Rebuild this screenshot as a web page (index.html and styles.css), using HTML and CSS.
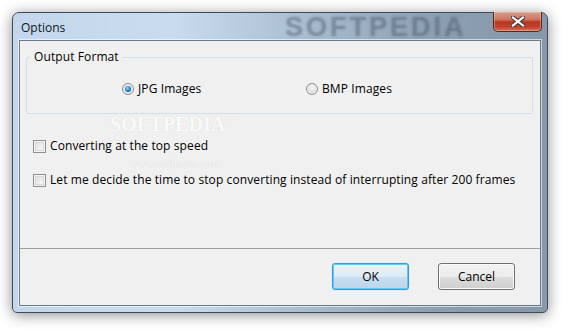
FILE: index.html
```html
<!DOCTYPE html>
<html lang="en">
<head>
    <meta charset="UTF-8">
    <title>Options</title>
    <link rel="stylesheet" href="styles.css">
</head>
<body>
    <div class="window">
        <div class="titlebar">
            <span class="title">Options</span>
            <span class="title-mark">SOFTPEDIA</span>
            <button class="close-btn" aria-label="Close">
                <svg width="14" height="11" viewBox="0 0 14 11">
                    <path d="M2 1.5 L12 9.5 M12 1.5 L2 9.5" stroke="#3a3a3a" stroke-width="4.2" stroke-linecap="square"/>
                    <path d="M2 1.5 L12 9.5 M12 1.5 L2 9.5" stroke="#ffffff" stroke-width="2.2" stroke-linecap="square"/>
                </svg>
            </button>
        </div>

        <div class="client">
            <div class="body">
                <fieldset class="group">
                    <legend>Output Format</legend>
                    <div class="radio-row">
                        <label class="option">
                            <span class="radio checked"></span>
                            JPG Images
                        </label>
                        <label class="option">
                            <span class="radio"></span>
                            BMP Images
                        </label>
                    </div>
                </fieldset>

                <div class="checks">
                    <label class="option">
                        <span class="checkbox"></span>
                        Converting at the top speed
                    </label>
                    <label class="option">
                        <span class="checkbox"></span>
                        Let me decide the time to stop converting instead of interrupting after 200 frames
                    </label>
                </div>

                <span class="mark-big">SOFTPEDIA<sup>™</sup></span>
                <span class="mark-small">www.softpedia.com</span>
            </div>

            <div class="footer">
                <button class="btn btn-default">OK</button>
                <button class="btn">Cancel</button>
            </div>
        </div>
    </div>
</body>
</html>
```

FILE: styles.css
```css
* {
    margin: 0;
    padding: 0;
    box-sizing: border-box;
}

body {
    width: 568px;
    height: 333px;
    background: #ffffff;
    font-family: 'Open Sans', 'Liberation Sans', sans-serif;
    font-size: 12px;
    color: #000;
    overflow: hidden;
}

.window {
    margin: 12px 0 0 12px;
    width: 536px;
    height: 301px;
    border: 1px solid #3f4b57;
    border-radius: 7px 7px 5px 5px;
    background: linear-gradient(90deg, #c3d7ec 0%, #c9dcef 30%, #a9bdd1 55%, #8c9eb1 80%, #8698aa 100%);
    box-shadow: 0 2px 14px rgba(0, 0, 0, 0.45);
    padding: 0 6px 6px 6px;
    display: flex;
    flex-direction: column;
    position: relative;
}

.titlebar {
    height: 27px;
    display: flex;
    align-items: center;
    position: relative;
}

.title {
    padding-left: 2px;
    font-size: 12px;
    color: #101820;
    margin-top: 1px;
}

.title-mark {
    position: absolute;
    left: 266px;
    top: -1px;
    font-family: 'Liberation Sans', sans-serif;
    font-weight: bold;
    font-size: 27px;
    letter-spacing: 3px;
    color: rgba(100, 115, 130, 0.18);
    text-shadow: 0 0 3px rgba(30, 45, 60, 0.3);
}

.close-btn {
    position: absolute;
    right: -1px;
    top: -1px;
    width: 49px;
    height: 20px;
    border: 1px solid #4d2a24;
    border-top: none;
    border-radius: 0 0 5px 5px;
    background: linear-gradient(180deg, #d99a8c 0%, #cf7560 40%, #b9361d 52%, #c0412a 78%, #d4745a 100%);
    box-shadow: inset 0 0 0 1px rgba(255, 220, 210, 0.35);
    display: flex;
    align-items: center;
    justify-content: center;
}

.client {
    flex: 1;
    background: #f0f0f0;
    border: 1px solid #6c7b8a;
    box-shadow: 0 0 0 1px rgba(255, 255, 255, 0.6);
    display: flex;
    flex-direction: column;
}

.body {
    height: 208px;
    border-bottom: 1px solid #a0a0a0;
    position: relative;
    padding: 8px 7px 0 6px;
    letter-spacing: 0.1px;
}

.group {
    border: 1px solid #d5dfe5;
    border-radius: 3px;
    height: 65px;
    padding: 0;
    margin: 0;
}

.group legend {
    margin-left: 3px;
    padding: 0 3px 0 4px;
    line-height: 16px;
}

.radio-row {
    display: grid;
    grid-template-columns: 184px auto;
    padding: 16px 0 0 95px;
}

.option {
    display: flex;
    align-items: center;
    gap: 4px;
    line-height: 16px;
}

.radio {
    width: 12px;
    height: 12px;
    border-radius: 50%;
    border: 1px solid #8d8d8d;
    background: radial-gradient(circle at 50% 40%, #f4f4f4 0%, #d9d9d9 70%, #cfcfcf 100%);
    box-shadow: inset 0 0 0 1px #f4f4f4;
    display: flex;
    align-items: center;
    justify-content: center;
}

.radio.checked::after {
    content: "";
    width: 6px;
    height: 6px;
    border-radius: 50%;
    background: radial-gradient(circle at 40% 35%, #9fd8ff 0%, #2a8ad8 45%, #0d4b8c 100%);
}

.checks {
    display: flex;
    flex-direction: column;
    gap: 18px;
    padding: 24px 0 0 7px;
}

.checkbox {
    width: 13px;
    height: 13px;
    border: 1px solid #8e8f8f;
    background: linear-gradient(135deg, #dcdcdc 0%, #efefef 60%, #fafafa 100%);
    box-shadow: inset 0 0 0 1px #f4f4f4, inset 0 0 0 2px #d6d6d6;
}

.mark-big {
    position: absolute;
    left: 90px;
    top: 73px;
    font-family: 'Liberation Serif', serif;
    font-weight: bold;
    font-size: 20px;
    line-height: 20px;
    color: rgba(255, 255, 255, 0.9);
    text-shadow: 0 0 1px rgba(150, 150, 150, 0.3);
}

.mark-big sup {
    font-size: 7px;
    line-height: 0;
}

.mark-small {
    position: absolute;
    left: 111px;
    top: 116px;
    font-family: 'Liberation Serif', serif;
    font-size: 11px;
    line-height: 12px;
    color: rgba(255, 255, 255, 0.9);
    text-shadow: 0 0 1px rgba(150, 150, 150, 0.45);
}

.footer {
    flex: 1;
    display: flex;
    justify-content: flex-end;
    align-items: flex-start;
    gap: 29px;
    padding: 14px 25px 0 0;
}

.btn {
    width: 77px;
    height: 27px;
    font-family: 'Open Sans', 'Liberation Sans', sans-serif;
    font-size: 12px;
    color: #000;
    border: 1px solid #707070;
    border-radius: 3px;
    background: linear-gradient(180deg, #f2f2f2 0%, #ebebeb 50%, #dddddd 51%, #cfcfcf 100%);
    box-shadow: inset 0 0 0 1px #fbfbfb;
}

.btn-default {
    border-color: #3c9bd6;
    background: linear-gradient(180deg, #eaf4fb 0%, #dcebf6 50%, #c9def0 51%, #bcd5ea 100%);
    box-shadow: inset 0 0 0 1px #63c8f5, 0 0 1px #63c8f5;
}
```
